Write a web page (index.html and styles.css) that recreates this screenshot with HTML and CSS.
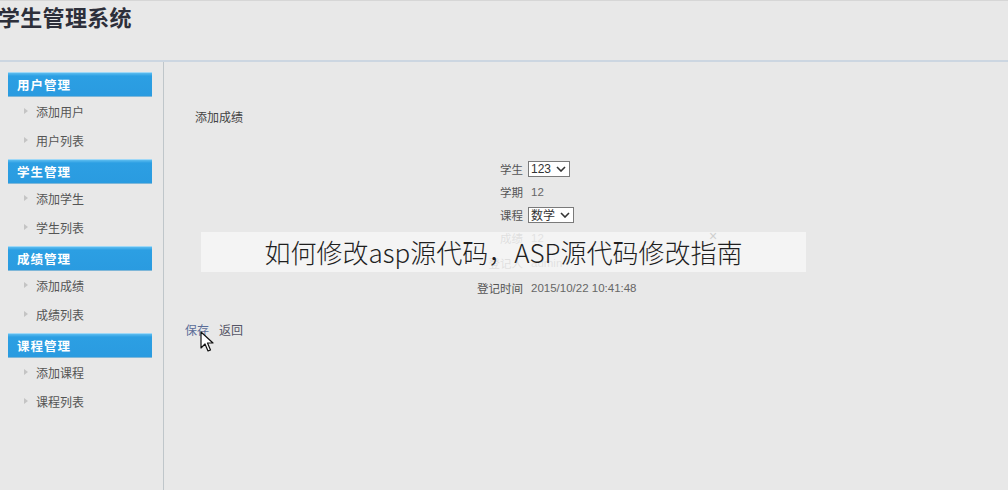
FILE: index.html
```html
<!DOCTYPE html>
<html lang="zh">
<head>
<meta charset="utf-8">
<title>学生管理系统</title>
<link rel="stylesheet" href="styles.css">
</head>
<body>
<header class="top">
  <h1 class="title">学生管理系统</h1>
</header>
<div class="main">
  <aside class="sidebar">
    <div class="group">
      <div class="group-head">用户管理</div>
      <a class="item">添加用户</a>
      <a class="item">用户列表</a>
    </div>
    <div class="group">
      <div class="group-head">学生管理</div>
      <a class="item">添加学生</a>
      <a class="item">学生列表</a>
    </div>
    <div class="group">
      <div class="group-head">成绩管理</div>
      <a class="item">添加成绩</a>
      <a class="item">成绩列表</a>
    </div>
    <div class="group">
      <div class="group-head">课程管理</div>
      <a class="item">添加课程</a>
      <a class="item">课程列表</a>
    </div>
  </aside>
  <section class="content">
    <div class="page-title">添加成绩</div>
    <div class="form">
      <div class="label">学生</div>
      <div class="value"><span class="select">123<svg class="chev" viewBox="0 0 10 6"><path d="M1 1 L5 5 L9 1" fill="none" stroke="#333" stroke-width="1.6"/></svg></span></div>
      <div class="label">学期</div>
      <div class="value text">12</div>
      <div class="label">课程</div>
      <div class="value"><span class="select">数学<svg class="chev" viewBox="0 0 10 6"><path d="M1 1 L5 5 L9 1" fill="none" stroke="#333" stroke-width="1.6"/></svg></span></div>
      <div class="label">成绩</div>
      <div class="value text">12</div>
      <div class="label">登记人</div>
      <div class="value text">admin</div>
      <div class="label">登记时间</div>
      <div class="value text">2015/10/22 10:41:48</div>
    </div>
    <div class="actions">
      <a class="save">保存</a>
      <a class="back">返回</a>
    </div>
  </section>
</div>
<div class="banner">
  <span class="banner-text">如何修改asp源代码，ASP源代码修改指南</span>
  <span class="banner-close">×</span>
</div>
<svg class="cursor" viewBox="0 0 14 22" width="14" height="22">
  <path d="M1 1 L1 17 L5 13 L8 20 L10.5 19 L7.5 12 L13 12 Z" fill="#fff" stroke="#111" stroke-width="1.2" stroke-linejoin="round"/>
</svg>
</body>
</html>
```
FILE: styles.css
```css
html, body {
  margin: 0;
  padding: 0;
}
body {
  width: 1008px;
  height: 490px;
  overflow: hidden;
  background: #e8e8e8;
  font-family: "Noto Sans CJK SC", "Liberation Sans", sans-serif;
  color: #555;
  position: relative;
}
.top {
  border-top: 1px solid #d6d6d6;
  border-bottom: 2px solid #ccd6e1;
  box-sizing: border-box;
  height: 62px;
}
.title {
  margin: 0 0 0 -2px;
  padding: 0;
  font-size: 22px;
  line-height: 30px;
  font-weight: 700;
  color: #2d2f3a;
  letter-spacing: 0.3px;
}
.main {
  display: flex;
  height: 428px;
}
.sidebar {
  width: 164px;
  box-sizing: border-box;
  border-right: 1px solid #bfc6ca;
  padding: 10px 0 0 8px;
  display: flex;
  flex-direction: column;
  gap: 4px;
}
.group {
  display: flex;
  flex-direction: column;
}
.group-head {
  width: 144px;
  height: 25px;
  box-sizing: border-box;
  background: linear-gradient(#5cbcef 0, #2c9fe3 3px, #2a9be0 100%);
  border-top: 1px solid #9fd8f7;
  border-bottom: 1px solid #7fb7d8;
  color: #fff;
  font-size: 12.5px;
  font-weight: 700;
  line-height: 23px;
  padding-left: 9px;
  letter-spacing: 1px;
}
.item {
  height: 29px;
  line-height: 29px;
  font-size: 12px;
  color: #555;
  padding-left: 28px;
  position: relative;
  display: block;
}
.item::before {
  content: "";
  position: absolute;
  left: 16px;
  top: 11px;
  border-left: 4px solid #c4c4c4;
  border-top: 3.5px solid transparent;
  border-bottom: 3.5px solid transparent;
}
.content {
  flex: 1;
  padding: 47px 0 0 31px;
}
.page-title {
  font-size: 12px;
  line-height: 16px;
  color: #444;
}
.form {
  margin-top: 33px;
  margin-left: 270px;
  display: grid;
  grid-template-columns: 58px auto;
  grid-template-rows: 22px 23px 23px 24px 25px 25px;
  column-gap: 5px;
  align-items: center;
  font-size: 11.5px;
}
.label {
  text-align: right;
  color: #555;
}
.value {
  color: #666;
  font-family: "Liberation Sans", "Noto Sans CJK SC", sans-serif;
}
.value.text {
  padding-left: 3px;
}
.select {
  display: inline-flex;
  align-items: center;
  gap: 5px;
  height: 16px;
  box-sizing: border-box;
  border: 1px solid #7a7a7a;
  background: #fff;
  padding: 0 3px 0 2px;
  color: #333;
  font-size: 12px;
  font-family: "Liberation Sans", "Noto Sans CJK SC", sans-serif;
}
.chev {
  width: 10px;
  height: 6px;
}
.actions {
  margin-top: 22px;
  margin-left: -10px;
  display: flex;
  gap: 10px;
  font-size: 12px;
  line-height: 16px;
}
.save {
  color: #5b6d98;
}
.back {
  color: #556;
}
.banner {
  position: absolute;
  left: 201px;
  top: 232px;
  width: 605px;
  height: 40px;
  background: rgba(246, 246, 246, 0.86);
  display: flex;
  align-items: center;
  justify-content: center;
}
.banner-text {
  font-family: "Noto Sans CJK SC", sans-serif;
  font-weight: 300;
  font-size: 26px;
  color: #1f1f1f;
  line-height: 40px;
}
.banner-close {
  position: absolute;
  left: 508px;
  top: -4px;
  font-size: 14px;
  color: #cfcfcf;
  font-family: "Liberation Sans", sans-serif;
}
.cursor {
  position: absolute;
  left: 200px;
  top: 331px;
}
```
